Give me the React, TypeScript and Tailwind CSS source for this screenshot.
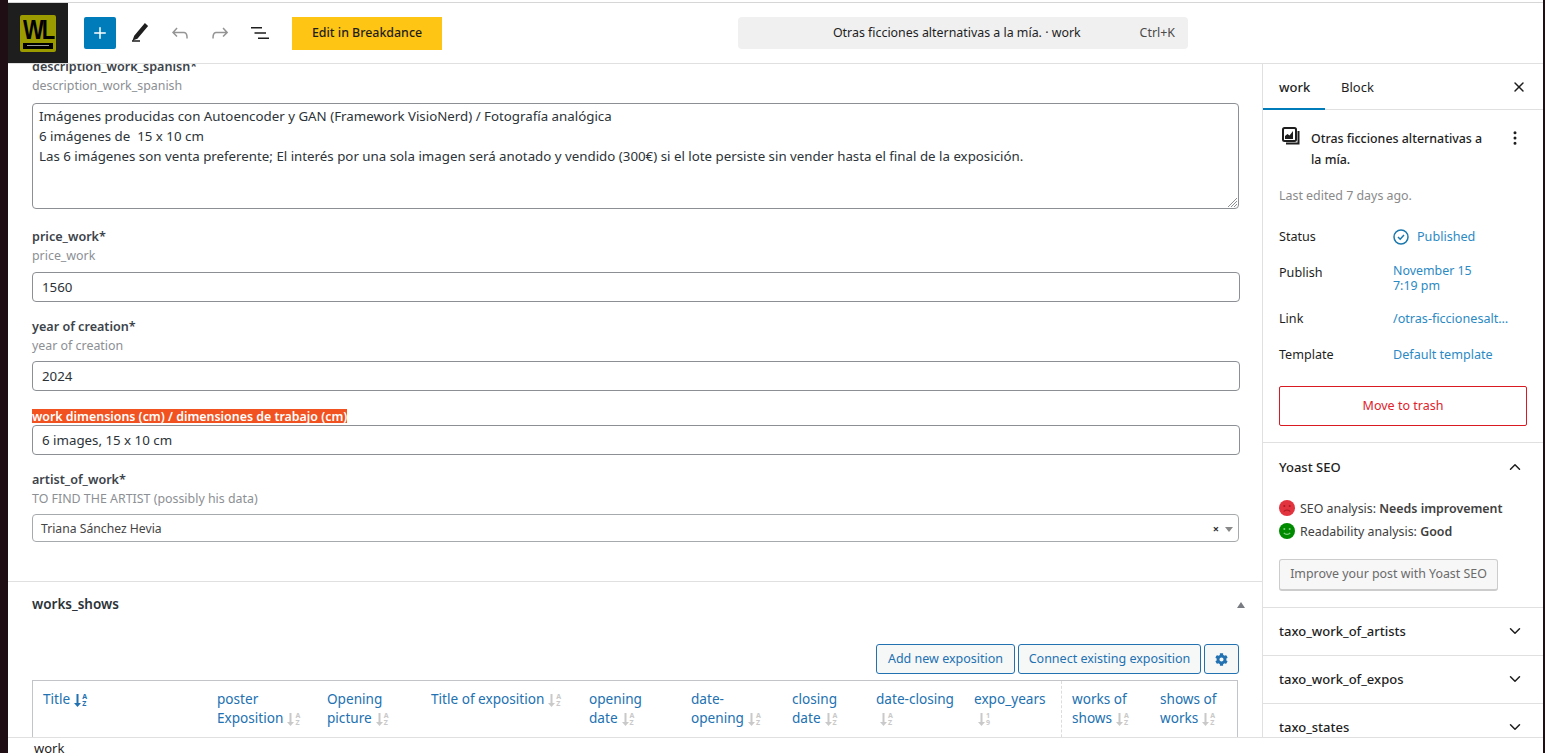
import { X, MoreVertical, ChevronUp, ChevronDown, Plus } from "lucide-react";
import { FaCog } from "react-icons/fa";

const fontFamily = "font-['Noto_Sans',sans-serif]";

const Pencil = () => (
  <svg width="24" height="24" viewBox="0 0 24 24" fill="#1e1e1e">
    <path d="M20.1 5.1 16.9 2 6.2 14.7l-1.7 4.8 4.9-1.7L20.1 5.1zM4 20.8h8v-1.5H4v1.5z" />
  </svg>
);

const Undo = () => (
  <svg width="24" height="24" viewBox="0 0 24 24" fill="#949494">
    <path d="M18.3 11.7c-.6-.6-1.4-.9-2.3-.9H6.7l2.9-3.3-1.1-1-4.5 5L8.5 16l1-1-2.7-2.7H16c.5 0 .9.2 1.3.5 1 1 1 3.4 1 4.5v.3h1.5v-.2c0-1.5 0-4.3-1.5-5.7z" />
  </svg>
);

const Redo = () => (
  <svg width="24" height="24" viewBox="0 0 24 24" fill="#949494">
    <path d="M15.6 6.5l-1.1 1 2.9 3.3H8c-.9 0-1.7.3-2.3.9-1.4 1.5-1.4 4.2-1.4 5.6v.2h1.5v-.3c0-1.1 0-3.5 1-4.5.3-.3.7-.5 1.3-.5h9.2L14.5 15l1.1 1.1 4.6-4.6-4.6-5z" />
  </svg>
);

const ListView = () => (
  <svg width="24" height="24" viewBox="0 0 24 24" fill="#1e1e1e">
    <path d="M3 6h11v1.5H3V6zm3.5 5.25H18v1.5H6.5v-1.5zM10 16.5h11V18H10v-1.5z" />
  </svg>
);

const SortIcon = ({ active, digits }: { active?: boolean; digits?: boolean }) => (
  <span className={`ml-1 inline-flex items-center align-middle ${active ? "text-[#2271b1]" : "text-[#c9c9c9]"}`}>
    <svg width="7" height="13" viewBox="0 0 7 13" fill="currentColor">
      <path d="M2.5 0h2v9H7l-3.5 4L0 9h2.5z" />
    </svg>
    <span className="ml-px flex flex-col text-[7px] leading-[7px] font-bold">
      <span>{digits ? "1" : "A"}</span>
      <span>{digits ? "9" : "Z"}</span>
    </span>
  </span>
);

const Field = ({ label, hint, value, gap }: { label: string; hint: string; value: string; gap: string }) => (
  <div>
    <div className="text-[12.6px] leading-[19px] font-semibold text-[#3c434a]">{label}</div>
    <div className="text-[12.4px] leading-[19px] text-[#8c8f94]">{hint}</div>
    <div className={`${gap} h-[30px] rounded-[4px] border border-[#8c8f94] px-[9px] pt-px flex items-center text-[13.3px] text-[#2c3338]`}>
      {value}
    </div>
  </div>
);

const Panel = ({ title }: { title: string }) => (
  <div className="h-12 border-b border-[#e0e0e0] flex items-center justify-between pl-4 pr-[19px] text-[13px] font-medium text-[#1e1e1e] shrink-0">
    <span className="pt-[2px]">{title}</span>
    <ChevronDown size={18} strokeWidth={2} />
  </div>
);

const Meta = ({ label, children, className }: { label: string; children: React.ReactNode; className?: string }) => (
  <div className={`flex text-[12.6px] leading-[18px] ${className ?? ""}`}>
    <div className="w-[114px] text-[#1e1e1e] shrink-0">{label}</div>
    <div className="text-[#2b8ac4]">{children}</div>
  </div>
);

const columns = [
  { w: "w-[174px]", a: "Title", active: true },
  { w: "w-[110px]", a: "poster", b: "Exposition" },
  { w: "w-[104px]", a: "Opening", b: "picture" },
  { w: "w-[158px]", a: "Title of exposition" },
  { w: "w-[102px]", a: "opening", b: "date" },
  { w: "w-[101px]", a: "date-", b: "opening" },
  { w: "w-[84px]", a: "closing", b: "date" },
  { w: "w-[98px]", a: "date-closing", b: "" },
  { w: "w-[87px]", a: "expo_years", b: "", digits: true },
  { w: "w-[99px]", a: "works of", b: "shows", dashed: true },
  { w: "w-[67px]", a: "shows of", b: "works" },
];

export default function App() {
  return (
    <div className={`h-[753px] w-[1545px] flex overflow-hidden bg-white ${fontFamily}`}>
      <div className="w-2 bg-[#1f0f14] shrink-0" />
      <div className="flex-1 min-w-0 flex flex-col">
        {/* top bar */}
        <div className="h-[3px] border-b border-[#d6d6d6] shrink-0" />
        <header className="h-[61px] border-b border-[#e0e0e0] flex items-center shrink-0">
          <div className="w-[60px] h-[60px] bg-[#1e1e1e] flex items-center justify-center shrink-0">
            <div className="w-9 h-[37px] bg-[#9b9b00] rounded-[2px] px-[3px] pt-[3px] pb-[3px] flex flex-col overflow-hidden">
              <span className="flex-1 text-center text-[22px] leading-[20px] font-bold tracking-[-2px] text-black origin-top scale-y-125 font-['Liberation_Sans',sans-serif]">WL</span>
              <span className="h-[6px] bg-black flex items-center justify-center">
                <span className="h-px w-[22px] bg-[#9a9a9a]" />
              </span>
            </div>
          </div>
          <button className="ml-4 w-8 h-8 bg-[#007cba] rounded-[2px] flex items-center justify-center text-white">
            <Plus size={18} strokeWidth={2} />
          </button>
          <div className="ml-3"><Pencil /></div>
          <div className="ml-4"><Undo /></div>
          <div className="ml-4"><Redo /></div>
          <div className="ml-4"><ListView /></div>
          <button className="ml-5 w-[150px] h-[33px] pt-px bg-[#ffc514] text-[12.4px] font-medium text-[#1e1e1e]">Edit in Breakdance</button>
          <div className="ml-[296px] w-[450px] h-8 pt-px rounded-[4px] bg-[#f0f0f0] flex items-center text-[12.4px] text-[#1e1e1e]">
            <span className="flex-1 text-center pl-[36px]">Otras ficciones alternativas a la mía. · work</span>
            <span className="pr-[13px] text-[#4a4a4a]">Ctrl+K</span>
          </div>
        </header>

        <div className="flex-1 min-h-0 flex">
          {/* main column */}
          <main className="w-[1254px] shrink-0 overflow-hidden">
            <div className="-mt-[7px] px-6">
              <div className="text-[12.6px] leading-[19px] font-semibold text-[#3c434a]">description_work_spanish*</div>
              <div className="text-[12.4px] leading-[19px] text-[#8c8f94]">description_work_spanish</div>
              <div className="relative mt-[8px] h-[106px] w-[1207px] rounded-[4px] border border-[#8c8f94] px-[6px] py-[2px] text-[13.3px] leading-[20px] text-[#2c3338]">
                <div>Imágenes producidas con Autoencoder y GAN (Framework VisioNerd) / Fotografía analógica</div>
                <div>6 imágenes de&nbsp; 15 x 10 cm</div>
                <div>Las 6 imágenes son venta preferente; El interés por una sola imagen será anotado y vendido (300€) si el lote persiste sin vender hasta el final de la exposición.</div>
                <svg className="absolute right-0 bottom-0" width="11" height="11" viewBox="0 0 11 11" stroke="#8c8f94" strokeWidth="1">
                  <path d="M1 10 10 1M4 10l6-6M7 10l3-3" />
                </svg>
              </div>
              <div className="mt-[18px] w-[1208px]">
                <Field label="price_work*" hint="price_work" value="1560" gap="mt-[7px]" />
              </div>
              <div className="mt-[15px] w-[1208px]">
                <Field label="year of creation*" hint="year of creation" value="2024" gap="mt-[6px]" />
              </div>
              <div className="mt-[18px] w-[1208px]">
                <div className="h-[14px] flex">
                  <span className="bg-[#f1521f] text-white text-[12.4px] pt-px leading-[13px] font-semibold">work dimensions (cm) / dimensiones de trabajo (cm)</span>
                </div>
                <div className="mt-[2px] h-[30px] rounded-[4px] border border-[#8c8f94] px-[9px] pt-px flex items-center text-[13.3px] text-[#2c3338]">6 images, 15 x 10 cm</div>
              </div>
              <div className="mt-[15px] w-[1207px]">
                <div className="text-[12.6px] leading-[19px] font-semibold text-[#3c434a]">artist_of_work*</div>
                <div className="text-[12.4px] leading-[19px] text-[#8c8f94]">TO FIND THE ARTIST (possibly his data)</div>
                <div className="mt-[6px] h-[28px] rounded-[4px] border border-[#a7aaad] pl-2 pr-[5px] pt-[2px] flex items-center text-[12.2px] text-[#444]">
                  <span className="flex-1">Triana Sánchez Hevia</span>
                  <span className="text-[11px] font-bold text-[#333] mr-[6px]">×</span>
                  <span className="w-0 h-0 border-x-[4px] border-x-transparent border-t-[5px] border-t-[#888]" />
                </div>
              </div>
            </div>

            <div className="mt-[39px] border-t border-[#e0e0e0] pt-[13px]">
              <div className="pl-6 pr-[17px] flex items-center justify-between h-[19px]">
                <span className="text-[13.5px] font-semibold text-[#2c3338]">works_shows</span>
                <span className="w-0 h-0 border-x-[4px] border-x-transparent border-b-[6px] border-b-[#787c82]" />
              </div>
              <div className="mt-[30px] ml-6 w-[1207px] flex justify-end gap-[3px] text-[12.5px] text-[#2271b1]">
                <button className="h-[30px] w-[139px] rounded-[3px] border border-[#2271b1] bg-[#f6f7f7]">Add new exposition</button>
                <button className="h-[30px] w-[183px] rounded-[3px] border border-[#2271b1] bg-[#f6f7f7]">Connect existing exposition</button>
                <button className="h-[30px] w-[35px] rounded-[3px] border border-[#2271b1] bg-[#f6f7f7] flex items-center justify-center">
                  <FaCog size={13} />
                </button>
              </div>
              <div className="ml-6 mt-[6px] w-[1206px] border border-[#c3c4c7] flex text-[13.6px] leading-[19px] text-[#2271b1] pt-[8px] pb-[20px] pl-[10px]">
                {columns.map((c) => (
                  <div key={c.a} className={`${c.w} shrink-0 ${c.dashed ? "border-l border-dashed border-[#dcdcde] pl-[10px] -mt-[8px] pt-[8px] -mb-[20px]" : ""}`}>
                    <div>{c.a}{c.b === undefined && <SortIcon active={c.active} />}</div>
                    {c.b !== undefined && <div>{c.b}<SortIcon digits={c.digits} /></div>}
                  </div>
                ))}
              </div>
            </div>
          </main>

          {/* settings sidebar */}
          <aside className="w-[281px] shrink-0 border-l border-[#e0e0e0] flex flex-col overflow-hidden">
            <div className="h-[46px] border-b border-[#e0e0e0] flex items-center text-[13px] text-[#1e1e1e] shrink-0">
              <div className="relative h-full w-[62px] flex items-center pl-4 pt-[2px] font-medium">
                work
                <span className="absolute left-0 right-0 -bottom-px h-[2px] bg-[#007cba]" />
              </div>
              <div className="ml-[16px] flex-1 pt-[2px]">Block</div>
              <X size={16} className="mr-4" strokeWidth={2.2} />
            </div>
            <div className="px-4 pt-[18px] pb-4 border-b border-[#e0e0e0] shrink-0">
              <div className="flex">
                <svg className="shrink-0 ml-[3px] -mt-[1px]" width="18" height="18" viewBox="0 0 18 18" fill="#1e1e1e">
                  <rect x="1" y="1" width="13" height="13" rx="1.5" fill="none" stroke="#1e1e1e" strokeWidth="2" />
                  <path d="M3 12V9l2.5-2 2 1.5L11 4v8z" />
                  <path d="M16.5 4v12.5H4" fill="none" stroke="#1e1e1e" strokeWidth="2" />
                </svg>
                <div className="ml-[11px] w-[178px] text-[12.4px] leading-[21px] font-medium text-[#1e1e1e]">Otras ficciones alternativas a la mía.</div>
                <MoreVertical size={18} className="ml-[17px] mt-[1px] text-[#1e1e1e]" />
              </div>
              <div className="mt-[17px] text-[12.4px] text-[#8a8a8a]">Last edited 7 days ago.</div>
              <Meta label="Status" className="mt-[22px]">
                <span className="flex items-center gap-[8px]">
                  <svg width="16" height="16" viewBox="0 0 16 16" fill="none" stroke="#1a78ad" strokeWidth="1.5">
                    <circle cx="8" cy="8" r="7" />
                    <path d="m5 8 2.2 2.2L11 6" />
                  </svg>
                  Published
                </span>
              </Meta>
              <Meta label="Publish" className="mt-[18px]">
                <div className="text-[12.4px] leading-[15px] -mt-px">November 15<br />7:19 pm</div>
              </Meta>
              <Meta label="Link" className="mt-[17px]">/otras-ficcionesalt…</Meta>
              <Meta label="Template" className="mt-[18px]">Default template</Meta>
              <button className="mt-[22px] w-[248px] h-10 pt-[2px] rounded-[2px] border border-[#d91a22] text-[12.5px] text-[#e0222a]">Move to trash</button>
            </div>
            <div className="px-4 pb-4 border-b border-[#e0e0e0] shrink-0">
              <div className="h-[48px] flex items-center justify-between pr-[3px] text-[13px] font-medium text-[#1e1e1e]">
                <span className="pt-[2px]">Yoast SEO</span>
                <ChevronUp size={18} strokeWidth={2} />
              </div>
              <div className="flex items-center text-[12.4px] leading-[23px] text-[#404040] mt-[6px]">
                <svg className="mr-[5px]" width="16" height="16" viewBox="0 0 16 16">
                  <circle cx="8" cy="8" r="8" fill="#e2343f" />
                  <circle cx="5.3" cy="6" r="1" fill="#a8181f" /><circle cx="10.7" cy="6" r="1" fill="#a8181f" />
                  <path d="M4.8 11.5c1.6-2 4.8-2 6.4 0" fill="none" stroke="#a8181f" strokeWidth="1.2" />
                </svg>
                SEO analysis:&nbsp;<b className="font-semibold">Needs improvement</b>
              </div>
              <div className="flex items-center text-[12.4px] leading-[23px] text-[#404040]">
                <svg className="mr-[5px]" width="16" height="16" viewBox="0 0 16 16">
                  <circle cx="8" cy="8" r="8" fill="#008a00" />
                  <circle cx="5.3" cy="6" r="1" fill="#7fd07f" /><circle cx="10.7" cy="6" r="1" fill="#7fd07f" />
                  <path d="M4.8 9.8c1.6 2 4.8 2 6.4 0" fill="none" stroke="#7fd07f" strokeWidth="1.2" />
                </svg>
                Readability analysis:&nbsp;<b className="font-semibold">Good</b>
              </div>
              <button className="mt-[16px] w-[219px] h-[32px] rounded-[3px] border border-[#ccc] border-b-2 bg-[#f7f7f7] text-[12.4px] text-[#6b6b6b]">Improve your post with Yoast SEO</button>
            </div>
            <Panel title="taxo_work_of_artists" />
            <Panel title="taxo_work_of_expos" />
            <Panel title="taxo_states" />
          </aside>
        </div>

        <footer className="h-4 border-t border-[#e0e0e0] bg-white pl-[26px] text-[13px] leading-[20px] text-[#1e1e1e] shrink-0 relative z-10">work</footer>
      </div>
      <div className="w-[2px] bg-[#1f0f14] shrink-0" />
    </div>
  );
}
